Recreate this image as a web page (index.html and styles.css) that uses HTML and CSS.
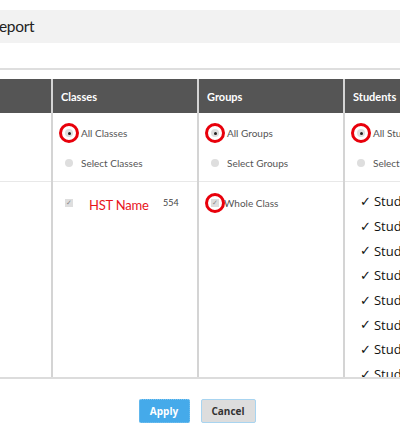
FILE: index.html
```html
<!DOCTYPE html>
<html>
<head>
<meta charset="utf-8">
<link rel="stylesheet" href="styles.css">
</head>
<body>
<div class="title"><span class="title-text">Report</span></div>
<div class="spacer"></div>
<div class="table">
  <div class="col col0">
    <div class="head"></div>
    <div class="opts"></div>
    <div class="list"></div>
  </div>
  <div class="col">
    <div class="head">Classes</div>
    <div class="opts">
      <div class="opt"><span class="radio on"><span class="ring"></span></span>All Classes</div>
      <div class="opt"><span class="radio"></span>Select Classes</div>
    </div>
    <div class="list">
      <div class="item"><span class="cbox">✓</span><span class="hst">HST Name</span><span class="count">554</span></div>
    </div>
  </div>
  <div class="col">
    <div class="head">Groups</div>
    <div class="opts">
      <div class="opt"><span class="radio on"><span class="ring"></span></span>All Groups</div>
      <div class="opt"><span class="radio"></span>Select Groups</div>
    </div>
    <div class="list">
      <div class="item"><span class="cbox">✓<span class="ring"></span></span><span class="whole">Whole Class</span></div>
    </div>
  </div>
  <div class="col">
    <div class="head">Students</div>
    <div class="opts">
      <div class="opt"><span class="radio on"><span class="ring"></span></span>All Students</div>
      <div class="opt"><span class="radio"></span>Select Students</div>
    </div>
    <div class="list students">
      <div class="stu"><span class="tick">✓</span>Student 1</div>
      <div class="stu"><span class="tick">✓</span>Student 2</div>
      <div class="stu"><span class="tick">✓</span>Student 3</div>
      <div class="stu"><span class="tick">✓</span>Student 4</div>
      <div class="stu"><span class="tick">✓</span>Student 5</div>
      <div class="stu"><span class="tick">✓</span>Student 6</div>
      <div class="stu"><span class="tick">✓</span>Student 7</div>
      <div class="stu"><span class="tick">✓</span>Student 8</div>
    </div>
  </div>
</div>
<div class="buttons">
  <button class="btn apply">Apply</button>
  <button class="btn cancel">Cancel</button>
</div>
</body>
</html>
```

FILE: styles.css
```css
html, body {
  margin: 0;
  padding: 0;
  background: #ffffff;
  overflow: hidden;
  width: 400px;
  height: 437px;
  font-family: Lato, "Open Sans", sans-serif;
}
.title {
  margin-top: 10px;
  height: 33px;
  background: #f2f2f2;
  overflow: hidden;
  display: flex;
  align-items: center;
}
.title-text {
  font-family: Lato, sans-serif;
  font-size: 15.5px;
  color: #222;
  margin-left: -10px;
  margin-top: -2px;
  letter-spacing: -0.3px;
}
.spacer {
  height: 25px;
  border-bottom: 2px solid #dedede;
  margin-bottom: 9px;
}
.table {
  display: grid;
  grid-template-columns: 51px 146px 146px 146px;
  width: 400px;
  overflow: hidden;
  border-bottom: 2px solid #dcdcdc;
}
.col {
  border-left: 2px solid #d4d4d4;
  min-width: 0;
  display: flex;
  flex-direction: column;
}
.col0 {
  border-left: none;
}
.head {
  height: 34px;
  background: #555555;
  color: #ffffff;
  font-weight: 700;
  font-size: 11px;
  display: flex;
  align-items: center;
  padding-left: 8px;
  white-space: nowrap;
}
.opts {
  height: 69px;
  border-bottom: 1px solid #e8e8e8;
  display: flex;
  flex-direction: column;
  padding-top: 14px;
  box-sizing: border-box;
  gap: 18px;
}
.opt {
  height: 12px;
  display: flex;
  align-items: center;
  font-size: 10px;
  color: #555;
  padding-left: 12px;
  white-space: nowrap;
}
.radio {
  position: relative;
  width: 8px;
  height: 8px;
  border-radius: 50%;
  background: #dedede;
  margin-right: 8px;
  flex: none;
}
.radio.on::after {
  content: "";
  position: absolute;
  left: 2.5px;
  top: 2.5px;
  width: 3px;
  height: 3px;
  border-radius: 50%;
  background: #222;
}
.ring {
  position: absolute;
  left: 50%;
  top: 50%;
  width: 20px;
  height: 20px;
  margin-left: -10px;
  margin-top: -10px;
  border: 3px solid #e8000b;
  border-radius: 50%;
  box-sizing: border-box;
}
.list {
  height: 195px;
  overflow: hidden;
}
.item {
  display: flex;
  align-items: center;
  height: 14px;
  margin-top: 14px;
  padding-left: 12px;
  white-space: nowrap;
}
.cbox {
  position: relative;
  width: 8px;
  height: 8px;
  background: #dedede;
  color: #8a8a8a;
  font-size: 7px;
  line-height: 8px;
  text-align: center;
  flex: none;
  font-family: "DejaVu Sans", sans-serif;
}
.hst {
  font-family: Lato, sans-serif;
  color: #e8141b;
  font-size: 13px;
  letter-spacing: -0.2px;
  margin-left: 16px;
  width: 74px;
  margin-top: 3px;
}
.count {
  font-size: 9px;
  color: #444;
  margin-top: -2px;
}
.whole {
  font-size: 10px;
  color: #555;
  margin-left: 5px;
}
.students {
  padding-top: 7px;
  box-sizing: border-box;
}
.stu {
  height: 24.7px;
  display: flex;
  align-items: center;
  font-family: "Open Sans", sans-serif;
  font-size: 13px;
  color: #111;
  padding-left: 15px;
  white-space: nowrap;
}
.tick {
  font-family: "DejaVu Sans", sans-serif;
  font-size: 13px;
  margin-right: 3px;
}
.buttons {
  display: flex;
  justify-content: center;
  gap: 11px;
  padding-top: 20px;
  padding-right: 6px;
}
.btn {
  height: 24px;
  font-family: "Open Sans", sans-serif;
  font-weight: 700;
  font-size: 10px;
  border-radius: 2px;
  padding: 0;
}
.apply {
  width: 51px;
  background: #45aaea;
  color: #fff;
  border: 1px dotted #7cc4f0;
}
.cancel {
  width: 55px;
  background: #dddddd;
  color: #333;
  border: 1px solid #a8d4f0;
}
```
